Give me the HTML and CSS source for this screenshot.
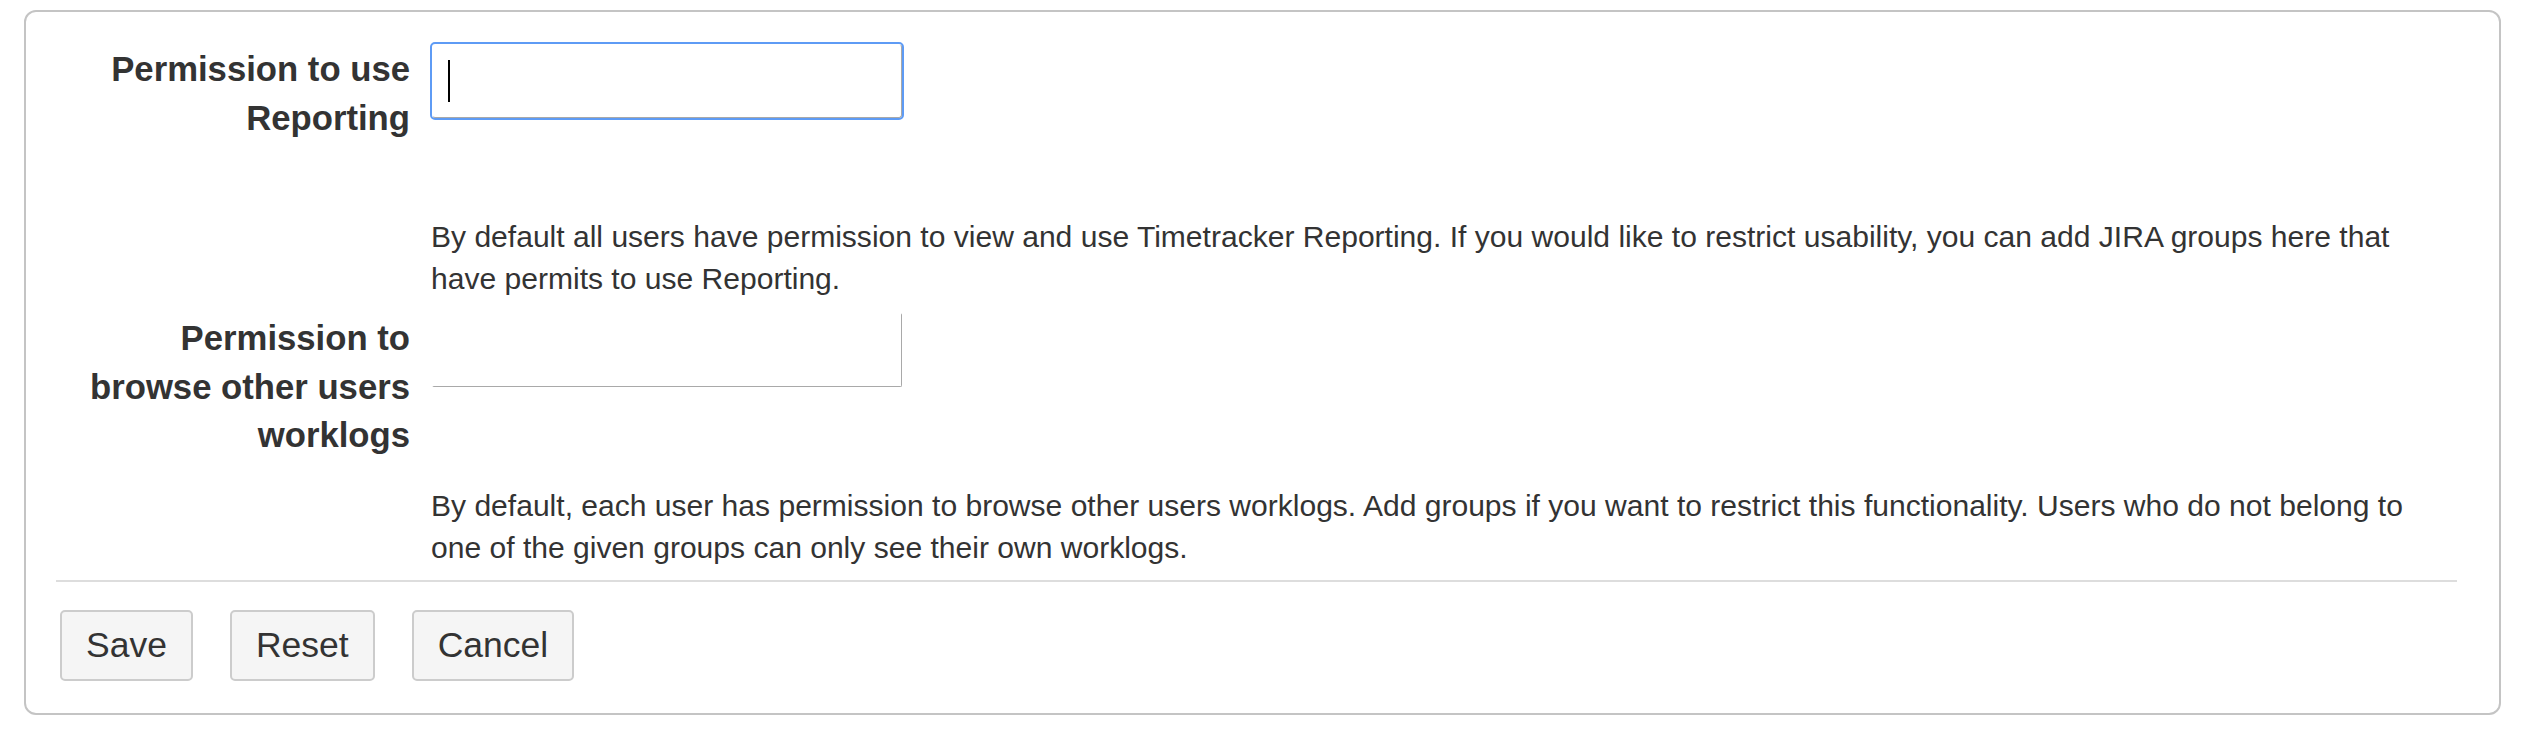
FILE: index.html
```html
<!DOCTYPE html>
<html lang="en">
<head>
<meta charset="utf-8">
<title>Timetracker permissions</title>
<link rel="stylesheet" href="styles.css">
</head>
<body>
<form class="panel">
  <div class="form-row">
    <label class="form-label">Permission to use Reporting</label>
    <div class="form-field">
      <div class="text-input focused"><span class="caret"></span></div>
      <p class="desc">By default all users have permission to view and use Timetracker Reporting. If you would like to restrict usability, you can add JIRA groups here that have permits to use Reporting.</p>
    </div>
  </div>
  <div class="form-row">
    <label class="form-label">Permission to browse other users worklogs</label>
    <div class="form-field">
      <div class="text-input"></div>
      <p class="desc">By default, each user has permission to browse other users worklogs. Add groups if you want to restrict this functionality. Users who do not belong to one of the given groups can only see their own worklogs.</p>
    </div>
  </div>
  <div class="form-footer">
    <button type="button" class="btn">Save</button>
    <button type="button" class="btn">Reset</button>
    <button type="button" class="btn">Cancel</button>
  </div>
</form>
</body>
</html>
```
FILE: styles.css
```css
html, body {
  margin: 0;
  padding: 0;
  background: #ffffff;
}
body {
  padding: 10px 29px 0 24px;
  font-family: "Liberation Sans", Arial, sans-serif;
  color: #333333;
}
.panel {
  display: block;
  border: 2px solid #c4c4c4;
  border-radius: 12px;
  padding: 32px 0 32px 0;
  margin: 0;
}
.form-row {
  display: grid;
  grid-template-columns: 340px 1fr;
  column-gap: 21px;
  padding: 0 59px 0 44px;
  align-items: start;
}
.form-row + .form-row {
  margin-top: 13px;
}
.form-label {
  font-size: 34.7px;
  line-height: 48.5px;
  font-weight: bold;
  text-align: right;
  color: #333333;
  margin-top: 1px;
}
.form-field {
  display: flex;
  flex-direction: column;
  align-items: flex-start;
}
.text-input {
  box-sizing: border-box;
  width: 470px;
  height: 74px;
  border: 1px solid;
  border-color: transparent #a9a9a9 #a9a9a9 transparent;
  border-radius: 2px;
  display: flex;
  align-items: flex-start;
  margin-left: 1px;
}
.text-input.focused {
  outline: 2px solid #5e9bf5;
  outline-offset: 0;
  border-radius: 3px;
}
.caret {
  display: block;
  width: 2px;
  height: 42px;
  background: #000000;
  margin: 15px 0 0 15px;
}
.desc {
  margin: 98px 0 0 0;
  font-size: 30.05px;
  line-height: 42px;
  color: #333333;
}
.form-footer {
  margin: 11px 42px 0 30px;
  border-top: 2px solid #dddddd;
  padding: 28px 0 0 4px;
  display: flex;
  gap: 37px;
}
.btn {
  font-family: "Liberation Sans", Arial, sans-serif;
  font-size: 35.5px;
  line-height: 40px;
  color: #333333;
  background: #f5f5f5;
  border: 2px solid #cccccc;
  border-radius: 5px;
  padding: 13px 24px 14px 24px;
  margin: 0;
}
```
